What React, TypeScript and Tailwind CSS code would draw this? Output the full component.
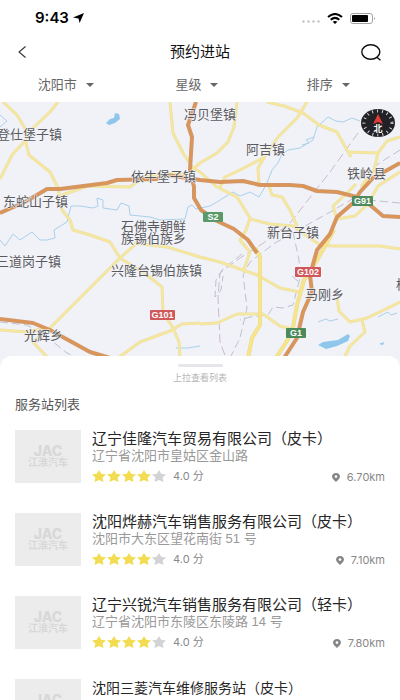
import clsx from "clsx";

type Station = {
  name: string;
  address?: string;
  score?: number;
  distance?: string;
  small?: boolean;
};

const stations: Station[] = [
  { name: "辽宁佳隆汽车贸易有限公司（皮卡）", address: "辽宁省沈阳市皇姑区金山路", score: 4, distance: "6.70km" },
  { name: "沈阳烨赫汽车销售服务有限公司（皮卡）", address: "沈阳市大东区望花南街 51 号", score: 4, distance: "7.10km" },
  { name: "辽宁兴锐汽车销售服务有限公司（轻卡）", address: "辽宁省沈阳市东陵区东陵路 14 号", score: 4, distance: "7.80km" },
  { name: "沈阳三菱汽车维修服务站（皮卡）", small: true },
];

const filters = [
  { label: "城市", value: "沈阳市" },
  { label: "星级", value: "星级" },
  { label: "排序", value: "排序" },
];

const minorRoads = [
  "M3 102L17 115L26 130L26 143L29 155L50 172L58 188L62 210L70 220L73 230L90 235L110 242L120 258L147 275L162 287L163 312L173 328L179 342L180 358",
  "M58 102L50 112L33 128L24 142L12 155L0 179",
  "M170 102L173 133L183 153L193 168L200 172L217 187L237 197L250 218L246 230L240 240L250 252L243 272",
  "M237 102L234 127L228 142L217 153L200 163L192 170",
  "M267 102L284 106L303 113L319 125L337 132L348 152L351 157",
  "M348 152L378 153L387 141L400 137",
  "M378 153L374 170L361 187",
  "M307 102L297 118L278 137L267 153L258 168L259 184",
  "M263 158L240 170L225 177L220 187",
  "M268 183L272 195L282 197L290 210L297 226",
  "M250 219L270 224L293 226L310 238L320 245L333 246L360 246L380 246L400 249",
  "M400 172L378 186L368 204L355 216L337 219L333 206L345 195L356 184",
  "M62 195L88 186L130 187L143 177L165 174L190 174",
  "M137 243L120 258L50 328L33 342L48 358",
  "M134 243L150 245L167 247L200 257L220 262L257 275L280 288L300 292",
  "M200 323L182 324L170 331L140 342L118 358",
  "M200 324L217 323L237 314L263 314L280 326L296 330",
  "M0 330L27 332L46 328",
  "M337 298L339 311L350 322L367 318L400 302",
  "M362 320L365 332L350 346L344 358",
];

const mediumRoads = [
  "M255 248L260 257L260 325L252 338L248 358",
  "M334 230L316 262L304 280L297 305L292 333L276 358",
];

const highways = [
  "M0 213L25 202L47 189L60 189L107 183L117 180L157 179L167 175L200 180L220 182L243 181L260 185L290 185L303 186L317 191L337 192L357 197L370 205L383 216L400 217",
  "M196 102L188 125L192 137L190 170L194 187L194 198L201 210L217 221L234 229L248 240L257 253",
  "M400 163L373 178L360 192L353 203L337 217L330 234L317 250L310 275L312 292L303 312L297 338L284 358",
  "M0 319L33 323L50 330L90 352L110 358",
];

const rivers = [
  "M0 115L7 121L0 127",
  "M0 240L5 246L13 234L20 240L32 232L40 240L47 240L55 238L54 230L67 222L71 206L80 206L93 208L98 206L97 198L103 200L103 208L117 210L121 203L129 206L130 215L150 217L160 220L185 219L188 207L192 205L196 209L210 206L217 202L233 192L240 196L250 192L259 197L262 192L267 183L272 170L278 163L282 154L288 150L300 148L313 140L317 127L328 117L336 121L343 122L352 118L360 121",
  "M302 145L309 143L306 140L314 137",
  "M318 322L326 319L330 321L338 319",
  "M378 317L388 312L391 315L397 313",
  "M176 348L188 348L200 346",
];

const railways = [
  "M400 150L378 164L358 178",
  "M354 198L332 211L307 225L275 243L250 262L243 275L247 308L240 338L230 358",
  "M293 232L299 260L300 278L293 305L283 308L273 307L268 315L250 317L240 320",
  "M0 322L27 325L47 337L67 353L78 358",
  "M292 276L300 283",
  "M368 200L400 203",
  "M242 254L222 270L216 280L215 297L221 290L223 276",
];

const pinkRailways = [
  "M358 133L330 172L290 223L262 244L240 258L220 273L218 297L220 342L226 358",
];

const places = [
  { x: -3, y: 139, text: "登仕堡子镇" },
  { x: 184, y: 119, text: "冯贝堡镇" },
  { x: 246, y: 154, text: "阿吉镇" },
  { x: 347, y: 178, text: "铁岭县" },
  { x: 131, y: 181, text: "依牛堡子镇" },
  { x: 3, y: 206, text: "东蛇山子镇" },
  { x: 121, y: 231, text: "石佛寺朝鲜" },
  { x: 121, y: 243, text: "族锡伯族乡" },
  { x: 267, y: 237, text: "新台子镇" },
  { x: -4, y: 266, text: "三道岗子镇" },
  { x: 111, y: 275, text: "兴隆台锡伯族镇" },
  { x: 305, y: 299, text: "马刚乡" },
  { x: 24, y: 340, text: "光辉乡" },
  { x: 396, y: 289, text: "横道河子" },
];

const shields = [
  { x: 203, y: 212, w: 20, color: "#5a9a68", text: "S2" },
  { x: 352, y: 196, w: 21, color: "#4f8a5c", text: "G91" },
  { x: 295, y: 267, w: 26, color: "#d0575a", text: "G102" },
  { x: 150, y: 310, w: 25, color: "#d0575a", text: "G101" },
  { x: 286, y: 328, w: 20, color: "#4b8a5a", text: "G1" },
];

function Roads({ paths, color, width, dash }: { paths: string[]; color: string; width: number; dash?: string }) {
  return (
    <g stroke={color} strokeWidth={width} strokeDasharray={dash} fill="none" strokeLinejoin="round">
      {paths.map((d) => (
        <path key={d} d={d} />
      ))}
    </g>
  );
}

function StationMap() {
  return (
    <svg
      viewBox="0 102 400 264"
      preserveAspectRatio="xMidYMin slice"
      className="block h-[264px] w-full shrink-0 bg-[#f0f2f8]"
      role="img"
      aria-label="地图"
    >
      <Roads paths={rivers} color="#a9d0ea" width={1} />
      <g fill="#8fc6ec">
        <path d="M106 123L110 119L114 118L115 113L119 114L120 119L115 123L109 125Z" />
        <path d="M318 345L323 342L338 340L348 334L350 336L348 341L337 346L326 349Z" />
        <path d="M379 344L384 342L383 345Z" />
      </g>
      <Roads paths={railways} color="#bfc0ce" width={1} dash="8 4" />
      <Roads paths={pinkRailways} color="#d0b8c9" width={1} dash="9 4" />
      <Roads paths={minorRoads} color="#ecdf9e" width={3} />
      <Roads paths={minorRoads} color="#f5e7a0" width={2} />
      <Roads paths={mediumRoads} color="#ecd98a" width={4} />
      <Roads paths={mediumRoads} color="#f6e58c" width={3} />
      <Roads paths={highways} color="#d0976a" width={4} />
      <Roads paths={highways} color="#dd9556" width={2} />

      <g
        className="font-['Liberation_Sans','Noto_Sans_CJK_SC',sans-serif] text-[13px]"
        fill="#5a5a5e"
        stroke="#f4f5f9"
        strokeWidth={1}
        paintOrder="stroke"
      >
        {places.map((p) => (
          <text key={p.text} x={p.x} y={p.y}>
            {p.text}
          </text>
        ))}
      </g>

      {shields.map((s) => (
        <g key={s.text}>
          <rect x={s.x} y={s.y} width={s.w} height={10} rx={1} fill={s.color} />
          <text
            x={s.x + s.w / 2}
            y={s.y + 8}
            textAnchor="middle"
            fill="#fff"
            className="font-['Liberation_Sans',sans-serif] text-[9px] font-bold"
          >
            {s.text}
          </text>
        </g>
      ))}

      {/* compass */}
      <ellipse cx={378} cy={123} rx={17} ry={14} fill="#222226" />
      <ellipse
        cx={378}
        cy={123}
        rx={14}
        ry={12}
        fill="none"
        stroke="#d5d5d8"
        strokeWidth={3}
        strokeDasharray="1 4"
      />
      <path d="M378 114L383 124L378 122L373 124Z" fill="#e23b3b" />
      <text
        x={378}
        y={132}
        textAnchor="middle"
        fill="#fff"
        className="font-['Liberation_Sans','Noto_Sans_CJK_SC',sans-serif] text-[9px] font-bold"
      >
        北
      </text>
    </svg>
  );
}

function StatusBar() {
  return (
    <div className="flex h-9 items-center justify-between pr-6 pl-[35px]">
      <div className="flex items-center gap-1">
        <span className="font-[Inter,sans-serif] text-[15px] font-semibold text-black">9:43</span>
        <svg viewBox="0 0 10 10" className="h-[10px] w-[11px]" preserveAspectRatio="none" aria-hidden="true">
          <path d="M10 0L6 10L5 5.5L0 4.5Z" fill="#000" />
        </svg>
      </div>
      <div className="flex items-center gap-[7px]">
        <svg viewBox="0 0 18 3" className="mt-1.5 h-[3px] w-[18px]" fill="#c4c4c4" aria-hidden="true">
          <circle cx="1.5" cy="1.5" r="1.2" />
          <circle cx="6.5" cy="1.5" r="1.2" />
          <circle cx="11.5" cy="1.5" r="1.2" />
          <circle cx="16.5" cy="1.5" r="1.2" />
        </svg>
        <svg viewBox="0 0 16 11" className="h-[11px] w-4" fill="none" stroke="#000" strokeWidth="2" aria-hidden="true">
          <path d="M1 4Q8 -2 15 4" />
          <path d="M3.7 6.8Q8 3 12.3 6.8" />
          <path d="M8 11L5.6 8.8Q8 7 10.4 8.8Z" fill="#000" stroke="none" />
        </svg>
        <svg viewBox="0 0 26 11" className="h-[11px] w-[26px]" aria-hidden="true">
          <rect x="0.5" y="0.5" width="22" height="10" rx="2.5" fill="none" stroke="#a3a3a3" />
          <rect x="2" y="2" width="16" height="7" rx="1" fill="#000" />
          <path d="M24 4Q26 5.5 24 7Z" fill="#a3a3a3" />
        </svg>
      </div>
    </div>
  );
}

function NavBar() {
  return (
    <header className="flex h-8 items-center justify-between px-[18px]">
      <button type="button" aria-label="返回" className="flex w-7 justify-start">
        <svg viewBox="0 0 8 12" className="h-3 w-2" fill="none" stroke="#333" strokeWidth="1.1">
          <path d="M7.5 0.5L1 6L7.5 11.5" />
        </svg>
      </button>
      <h1 className="text-[15px] text-[#111]">预约进站</h1>
      <button type="button" aria-label="搜索" className="flex w-7 justify-end">
        <svg viewBox="0 0 21 17" className="h-[17px] w-[21px]" fill="none" stroke="#111" strokeWidth="1.4">
          <ellipse cx="9.8" cy="8" rx="9" ry="7.3" />
          <path d="M15.5 13L19.5 16.3" />
        </svg>
      </button>
    </header>
  );
}

function FilterBar() {
  return (
    <div className="grid h-[34px] grid-cols-3 items-center pr-1.5">
      {filters.map((f) => (
        <label key={f.label} className="flex items-center justify-center gap-2">
          <select
            aria-label={f.label}
            defaultValue={f.value}
            className="appearance-none bg-transparent text-[13px] text-[#666] outline-none"
          >
            <option>{f.value}</option>
          </select>
          <svg viewBox="0 0 8 4" className="h-1 w-2" aria-hidden="true">
            <path d="M0 0H8L4 4Z" fill="#666" />
          </svg>
        </label>
      ))}
    </div>
  );
}

function Stars({ score }: { score: number }) {
  return (
    <span className="flex gap-px" role="img" aria-label={`${score} / 5`}>
      {[1, 2, 3, 4, 5].map((n) => (
        <svg key={n} viewBox="0 0 14 12" className="h-3 w-[14px]">
          <path
            d="M7 0L9.2 3.8L14 4.6L10.6 7.5L11.5 12L7 9.9L2.5 12L3.4 7.5L0 4.6L4.8 3.8Z"
            className={clsx(n <= score ? "fill-[#f1dc52]" : "fill-[#d3d3d5]")}
          />
        </svg>
      ))}
    </span>
  );
}

function StationCard({ station }: { station: Station }) {
  return (
    <li className="flex h-[83px] gap-[11px]">
      <div className="flex h-[53px] w-[66px] shrink-0 flex-col items-center justify-center bg-[#ececec] text-[#d8d8d8]">
        <span className="font-[Inter,sans-serif] text-[14px] leading-3 font-extrabold">JAC</span>
        <span className="text-[10px] leading-3 font-bold">江淮汽车</span>
      </div>
      <div className="min-w-0 flex-1">
        <h3
          className={clsx(
            "leading-[18px] whitespace-nowrap text-[#262626]",
            station.small ? "text-[14px]" : "text-[15px]",
          )}
        >
          {station.name}
        </h3>
        {station.address && (
          <p className="text-[13px] leading-4 whitespace-nowrap text-[#999]">{station.address}</p>
        )}
        <div className="mt-[3px] flex items-center justify-between font-[Inter,'Noto_Sans_CJK_SC',sans-serif] text-[11px] leading-4 text-[#888]">
          {station.score && (
            <div className="flex items-center gap-[7px]">
              <Stars score={station.score} />
              <span>{station.score.toFixed(1)} 分</span>
            </div>
          )}
          {station.distance && (
            <div className="flex items-center gap-[7px] pt-0.5">
              <svg viewBox="0 0 8 9" className="h-[9px] w-2" aria-hidden="true">
                <path
                  fillRule="evenodd"
                  d="M4 0C6.3 0 8 1.5 8 3.6C8 5.8 5.5 7.5 4 9C2.5 7.5 0 5.8 0 3.6C0 1.5 1.7 0 4 0ZM4 2.2A1.4 1.4 0 1 0 4 5A1.4 1.4 0 1 0 4 2.2Z"
                  fill="#858585"
                />
              </svg>
              <span>{station.distance}</span>
            </div>
          )}
        </div>
      </div>
    </li>
  );
}

export default function App() {
  return (
    <main className="flex h-screen flex-col overflow-hidden bg-white font-['Liberation_Sans','Noto_Sans_CJK_SC',sans-serif]">
      <StatusBar />
      <NavBar />
      <FilterBar />
      <StationMap />
      <section className="relative -mt-2.5 flex min-h-0 flex-1 flex-col rounded-t-xl bg-white px-[15px]">
        <div className="flex flex-col items-center gap-1 pt-2">
          <span className="h-[3px] w-[45px] rounded-full bg-[#e6e6ea]" />
          <span className="text-[9px] leading-[14px] text-[#b5b5b5]">上拉查看列表</span>
        </div>
        <h2 className="mt-3 text-[13px] leading-4 text-[#555]">服务站列表</h2>
        <ul className="mt-[17px] min-h-0 flex-1 overflow-y-auto [scrollbar-width:none]">
          {stations.map((s) => (
            <StationCard key={s.name} station={s} />
          ))}
        </ul>
      </section>
    </main>
  );
}
